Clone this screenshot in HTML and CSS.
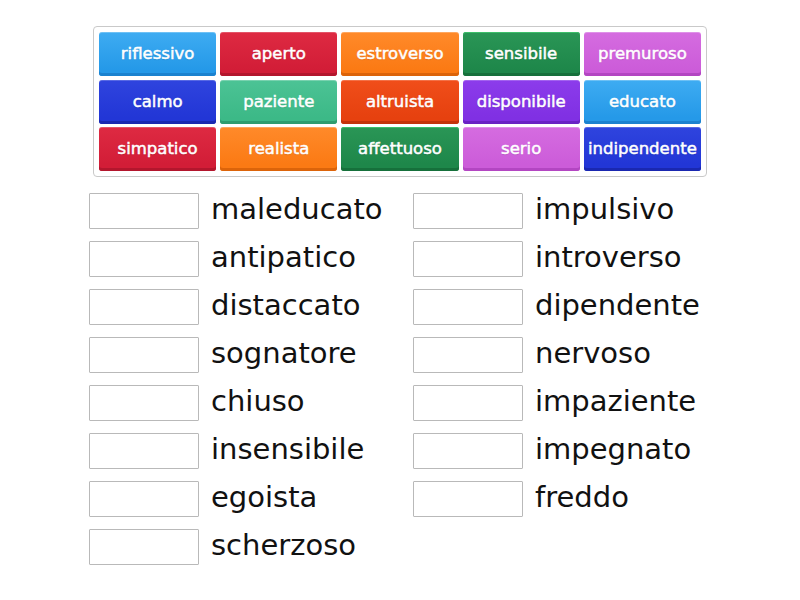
FILE: index.html
```html
<!DOCTYPE html>
<html lang="it">
<head>
<meta charset="utf-8">
<title>Abbinamento aggettivi</title>
<link rel="stylesheet" href="styles.css">
</head>
<body>
<div class="bank">
  <div class="tile c-sky">riflessivo</div>
  <div class="tile c-red">aperto</div>
  <div class="tile c-orange">estroverso</div>
  <div class="tile c-green">sensibile</div>
  <div class="tile c-pink">premuroso</div>
  <div class="tile c-blue">calmo</div>
  <div class="tile c-teal">paziente</div>
  <div class="tile c-redorange">altruista</div>
  <div class="tile c-purple">disponibile</div>
  <div class="tile c-sky">educato</div>
  <div class="tile c-red">simpatico</div>
  <div class="tile c-orange">realista</div>
  <div class="tile c-green">affettuoso</div>
  <div class="tile c-pink">serio</div>
  <div class="tile c-blue">indipendente</div>
</div>
<div class="answers">
  <div class="col">
    <div class="row"><span class="box"></span><span class="word">maleducato</span></div>
    <div class="row"><span class="box"></span><span class="word">antipatico</span></div>
    <div class="row"><span class="box"></span><span class="word">distaccato</span></div>
    <div class="row"><span class="box"></span><span class="word">sognatore</span></div>
    <div class="row"><span class="box"></span><span class="word">chiuso</span></div>
    <div class="row"><span class="box"></span><span class="word">insensibile</span></div>
    <div class="row"><span class="box"></span><span class="word">egoista</span></div>
    <div class="row"><span class="box"></span><span class="word">scherzoso</span></div>
  </div>
  <div class="col">
    <div class="row"><span class="box"></span><span class="word">impulsivo</span></div>
    <div class="row"><span class="box"></span><span class="word">introverso</span></div>
    <div class="row"><span class="box"></span><span class="word">dipendente</span></div>
    <div class="row"><span class="box"></span><span class="word">nervoso</span></div>
    <div class="row"><span class="box"></span><span class="word">impaziente</span></div>
    <div class="row"><span class="box"></span><span class="word">impegnato</span></div>
    <div class="row"><span class="box"></span><span class="word">freddo</span></div>
  </div>
</div>
</body>
</html>
```

FILE: styles.css
```css
html, body {
  margin: 0;
  padding: 0;
  background: #ffffff;
}

body {
  font-family: "DejaVu Sans", "Open Sans", sans-serif;
  color: #1a1a1a;
}

.bank {
  width: 602px;
  margin: 26px auto 0;
  padding: 5px;
  border: 1px solid #c9c9c9;
  border-radius: 4px;
  display: grid;
  grid-template-columns: repeat(5, 1fr);
  column-gap: 4px;
  row-gap: 3.5px;
}

.tile {
  height: 44px;
  padding-bottom: 1px;
  border-radius: 3px;
  display: flex;
  align-items: center;
  justify-content: center;
  color: #ffffff;
  font-size: 16.5px;
  -webkit-text-stroke: 0.5px #ffffff;
  text-shadow: 0 1px 1px rgba(0, 0, 0, 0.12);
  white-space: nowrap;
  box-sizing: border-box;
}

.c-sky {
  background: linear-gradient(#3eacf2, #2599e8 85%);
  box-shadow: inset 0 -3px 0 #1b82cf, inset 0 1px 0 rgba(255,255,255,0.25);
}
.c-red {
  background: linear-gradient(#de2a42, #d21d37 85%);
  box-shadow: inset 0 -3px 0 #b3162d, inset 0 1px 0 rgba(255,255,255,0.2);
}
.c-orange {
  background: linear-gradient(#ff8a2a, #fb7a14 85%);
  box-shadow: inset 0 -3px 0 #dc640a, inset 0 1px 0 rgba(255,255,255,0.25);
}
.c-green {
  background: linear-gradient(#2a9656, #1e874a 85%);
  box-shadow: inset 0 -3px 0 #16703b, inset 0 1px 0 #3cbf6a;
}
.c-pink {
  background: linear-gradient(#d56ce0, #cc5cd9 85%);
  box-shadow: inset 0 -3px 0 #b346c2, inset 0 1px 0 rgba(255,255,255,0.25);
}
.c-blue {
  background: linear-gradient(#2f44de, #2236d6 85%);
  box-shadow: inset 0 -3px 0 #1a28b0, inset 0 1px 0 rgba(255,255,255,0.2);
}
.c-teal {
  background: linear-gradient(#4cc395, #3cb987 85%);
  box-shadow: inset 0 -3px 0 #2f9c6f, inset 0 1px 0 rgba(255,255,255,0.25);
}
.c-redorange {
  background: linear-gradient(#f04e1a, #e6410f 85%);
  box-shadow: inset 0 -3px 0 #c4330a, inset 0 1px 0 rgba(255,255,255,0.2);
}
.c-purple {
  background: linear-gradient(#8c3ceb, #8030e3 85%);
  box-shadow: inset 0 -3px 0 #6a22c4, inset 0 1px 0 rgba(255,255,255,0.2);
}

.answers {
  margin: 16px 0 0 89px;
  display: flex;
}

.col {
  width: 324px;
  display: flex;
  flex-direction: column;
  gap: 12px;
}

.row {
  display: flex;
  align-items: flex-start;
  height: 36px;
}

.box {
  width: 110px;
  height: 36px;
  box-sizing: border-box;
  border: 1px solid #b9b9b9;
  border-radius: 1px;
  background: #ffffff;
  flex: none;
}

.word {
  margin-left: 12px;
  font-size: 29px;
  line-height: 33px;
  color: #111111;
  white-space: nowrap;
}
```
